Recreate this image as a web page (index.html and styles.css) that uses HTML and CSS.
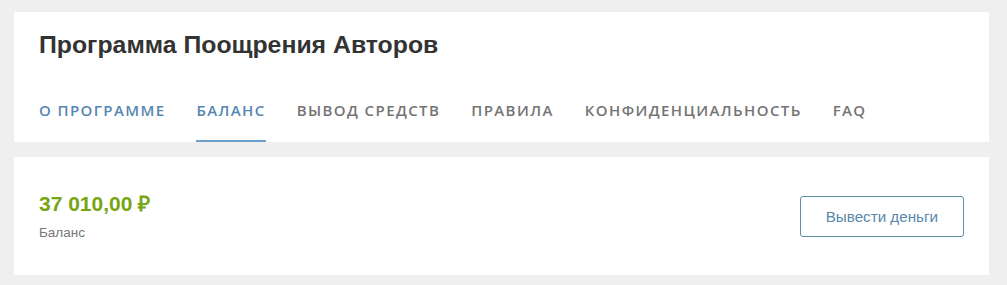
FILE: index.html
```html
<!DOCTYPE html>
<html lang="ru">
<head>
  <meta charset="UTF-8" />
  <meta name="viewport" content="width=device-width, initial-scale=1.0" />
  <title>Программа Поощрения Авторов</title>
  <link rel="stylesheet" href="styles.css">
</head>
<body>
  <div class="card header">
    <h1 class="title">Программа Поощрения Авторов</h1>
    <nav class="tabs">
      <a href="#" class="tab blue">О программе</a>
      <a href="#" class="tab blue active">Баланс</a>
      <a href="#" class="tab">Вывод средств</a>
      <a href="#" class="tab">Правила</a>
      <a href="#" class="tab">Конфиденциальность</a>
      <a href="#" class="tab">FAQ</a>
    </nav>
  </div>

  <div class="card balance">
    <div class="balance-info">
      <div class="amount">37 010,00 ₽</div>
      <div class="label">Баланс</div>
    </div>
    <button class="withdraw">Вывести деньги</button>
  </div>
</body>
</html>
```

FILE: styles.css
```css
* {
  margin: 0;
  padding: 0;
  box-sizing: border-box;
}
body {
  background: #efefef;
  font-family: 'Liberation Sans', Arial, sans-serif;
  padding: 12px 18px 0 14px;
}
.card {
  background: #fff;
  padding: 0 25px;
}
.header {
  padding-top: 19px;
}
.title {
  font-size: 24.8px;
  line-height: 28px;
  font-weight: bold;
  color: #333;
  margin-bottom: 21px;
}
.tabs {
  display: flex;
  gap: 31px;
}
.tab {
  font-family: 'Open Sans', sans-serif;
  font-size: 15px;
  font-weight: 600;
  line-height: 20px;
  letter-spacing: 1.4px;
  text-transform: uppercase;
  text-decoration: none;
  color: #747474;
  padding: 20px 0 20px;
  border-bottom: 2px solid transparent;
  white-space: nowrap;
}
.tab.blue {
  color: #5587b2;
}
.tab.active {
  border-bottom-color: #6e9fca;
}
.balance {
  margin-top: 15px;
  height: 118px;
  display: flex;
  align-items: center;
  justify-content: space-between;
}
.amount {
  font-size: 21px;
  line-height: 24px;
  font-weight: bold;
  color: #78a513;
}
.label {
  margin-top: 9px;
  font-size: 13.5px;
  line-height: 16px;
  color: #777;
}
.withdraw {
  font-family: 'Liberation Sans', Arial, sans-serif;
  font-size: 15.2px;
  line-height: 17px;
  color: #5788ab;
  background: #fff;
  border: 1px solid #5b8ea9;
  border-radius: 3px;
  padding: 11px 25px;
  white-space: nowrap;
  cursor: pointer;
}
```
